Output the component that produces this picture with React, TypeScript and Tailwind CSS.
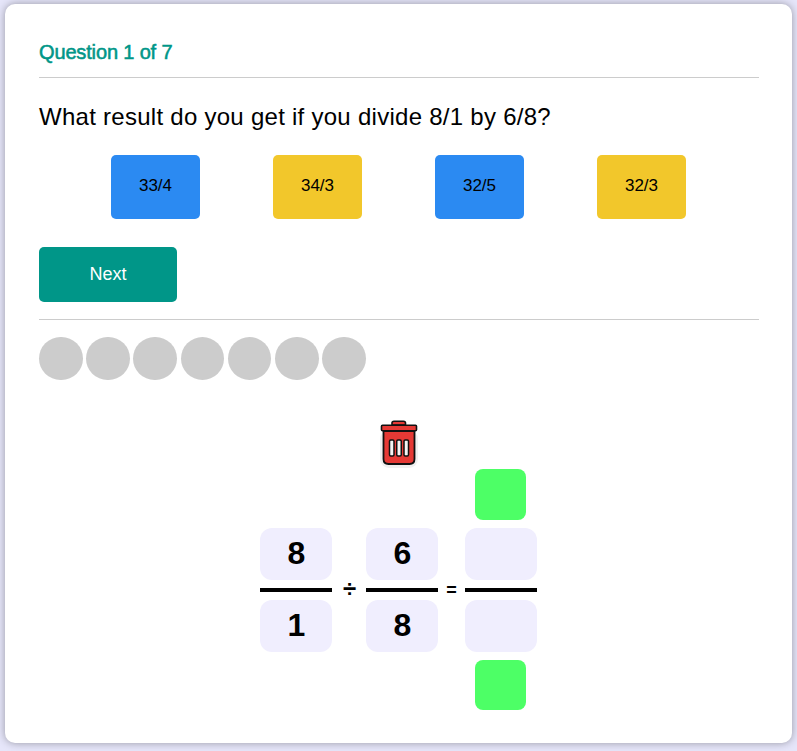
import React from 'react'

const options = [
  { label: '33/4', color: 'bg-[#2b8af2]' },
  { label: '34/3', color: 'bg-[#f2c72b]' },
  { label: '32/5', color: 'bg-[#2b8af2]' },
  { label: '32/3', color: 'bg-[#f2c72b]' },
]

function TrashIcon() {
  return (
    <svg width="38" height="48" viewBox="0 0 38 48" className="ml-px block">
      <rect x="0" y="10" width="38" height="38" rx="9" fill="#f0f0f0" />
      <path d="M12 5 V3 Q12 1.2 14 1.2 H23.5 Q25.5 1.2 25.5 3 V5 Z" fill="#e53935" stroke="#111" strokeWidth="1.6" />
      <path d="M2.5 5.2 H35.5 Q36.5 5.2 36.5 6.2 V9.8 Q36.5 10.8 35.5 10.8 H2.5 Q1.5 10.8 1.5 9.8 V6.2 Q1.5 5.2 2.5 5.2 Z" fill="#e53935" stroke="#111" strokeWidth="1.6" />
      <path d="M3.5 11 H34.5 V39 Q34.5 44 29.5 44 H8.5 Q3.5 44 3.5 39 Z" fill="#e53935" stroke="#111" strokeWidth="1.8" />
      <rect x="9.5" y="20" width="4.5" height="16" rx="1.2" fill="#f5f5f5" stroke="#111" strokeWidth="1.5" />
      <rect x="16.75" y="20" width="4.5" height="16" rx="1.2" fill="#f5f5f5" stroke="#111" strokeWidth="1.5" />
      <rect x="24" y="20" width="4.5" height="16" rx="1.2" fill="#f5f5f5" stroke="#111" strokeWidth="1.5" />
    </svg>
  )
}

function Tile({ value }: { value?: string }) {
  return (
    <div className="flex h-[52px] w-[72px] items-center justify-center rounded-xl bg-[#f0eefe] pb-px pl-px text-[32px] leading-none font-bold text-black">
      {value}
    </div>
  )
}

function Fraction({ top, bottom }: { top?: string; bottom?: string }) {
  return (
    <div className="flex flex-col items-center">
      <Tile value={top} />
      <div className="mt-2 mb-2 h-1 w-[72px] bg-black" />
      <Tile value={bottom} />
    </div>
  )
}

export default function App() {
  return (
    <div className="h-[751px] w-[797px] overflow-hidden bg-[#e6e6fa] pt-1 pl-[5px] font-['Liberation_Sans',Arial,sans-serif]">
      <div className="h-[739px] w-[787px] rounded-[10px] bg-white pt-[37px] pr-[33px] pl-[34px] shadow-[0_0_8px_rgba(0,0,0,0.35)]">
        {/* header */}
        <h2 className="text-[20px] leading-[23px] font-normal tracking-[-0.15px] text-[#009688] [-webkit-text-stroke:0.55px_#009688]">
          Question 1 of 7
        </h2>
        <div className="mt-[13px] h-px bg-[#cccccc]" />
        <p className="mt-[25px] text-2xl leading-[28px] tracking-[0.27px] text-black">
          What result do you get if you divide 8/1 by 6/8?
        </p>

        {/* answers */}
        <div className="mt-[24px] flex justify-center gap-[73px] pr-px">
          {options.map((o) => (
            <button
              key={o.label}
              className={`h-16 w-[89px] rounded-[5px] pb-[2px] text-[17px] text-black ${o.color}`}
            >
              {o.label}
            </button>
          ))}
        </div>

        <button className="mt-7 block h-[55px] w-[138px] rounded-[5px] bg-[#009688] pb-[2px] text-lg text-white">
          Next
        </button>
        <div className="mt-[17px] h-px bg-[#cccccc]" />

        {/* progress */}
        <div className="mt-[17px] flex gap-[3.6px]">
          {[0, 1, 2, 3, 4, 5, 6].map((i) => (
            <div key={i} className="h-[43px] w-[43.6px] rounded-full bg-[#cccccc]" />
          ))}
        </div>

        {/* workspace */}
        <div className="mt-[40px] flex flex-col items-center pr-px">
          <TrashIcon />
          <div className="mt-px flex items-center">
            <Fraction top="8" bottom="1" />
            <div className="w-[34px] pb-[2px] pl-px text-center text-2xl leading-none font-bold text-black">÷</div>
            <Fraction top="6" bottom="8" />
            <div className="w-[27px] text-center text-lg leading-none font-bold text-black">=</div>
            <div className="flex flex-col items-center">
              <div className="mb-2 h-[51px] w-[51px] -translate-x-px rounded-lg bg-[#4dff66]" />
              <Fraction />
              <div className="mt-2 h-[50px] w-[51px] -translate-x-px rounded-lg bg-[#4dff66]" />
            </div>
          </div>
        </div>
      </div>
    </div>
  )
}
